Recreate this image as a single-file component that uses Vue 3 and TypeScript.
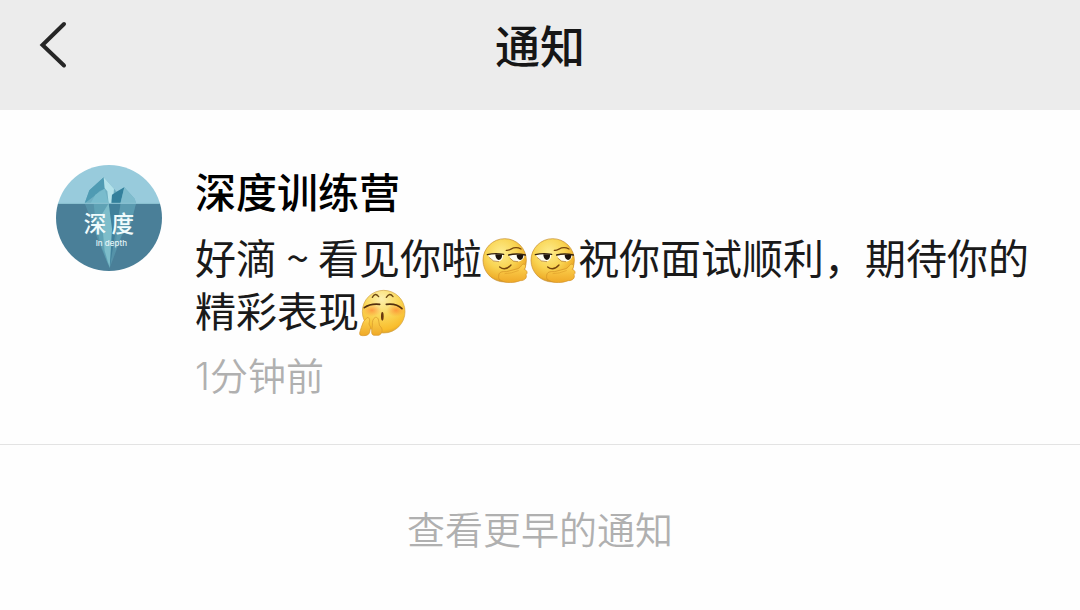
<script setup lang="ts">
type Part = { kind: 'text'; value: string } | { kind: 'smirk' } | { kind: 'whisper' }

interface Notice {
  name: string
  parts: Part[]
  time: string
}

const notices: Notice[] = [
  {
    name: '深度训练营',
    parts: [
      { kind: 'text', value: '好滴 ~ 看见你啦' },
      { kind: 'smirk' },
      { kind: 'smirk' },
      { kind: 'text', value: '祝你面试顺利，期待你的' },
      { kind: 'text', value: '精彩表现' },
      { kind: 'whisper' },
    ],
    time: '1分钟前',
  },
]
</script>

<template>
  <div class="page">
    <svg class="defs" width="0" height="0" aria-hidden="true">
      <defs>
        <radialGradient id="face" cx="0.42" cy="0.32" r="0.72">
          <stop offset="0" stop-color="#fdec8e" />
          <stop offset="0.5" stop-color="#f9d452" />
          <stop offset="0.82" stop-color="#f0b22e" />
          <stop offset="1" stop-color="#c9881c" />
        </radialGradient>
        <linearGradient id="hand" x1="0" y1="0" x2="0" y2="1">
          <stop offset="0" stop-color="#fed653" />
          <stop offset="1" stop-color="#efa928" />
        </linearGradient>
        <radialGradient id="pale" cx="0.45" cy="0.2" r="0.85">
          <stop offset="0" stop-color="#fdf0b0" />
          <stop offset="0.45" stop-color="#fad95c" />
          <stop offset="0.85" stop-color="#f9bd2c" />
          <stop offset="1" stop-color="#d99a25" />
        </radialGradient>
        <radialGradient id="blush">
          <stop offset="0" stop-color="#ff7a2e" stop-opacity="0.65" />
          <stop offset="1" stop-color="#ff8c32" stop-opacity="0" />
        </radialGradient>
      </defs>
    </svg>

    <header class="bar">
      <button class="back" type="button" aria-label="返回">
        <svg viewBox="0 0 28 48" width="28" height="48" aria-hidden="true">
          <path d="M25 3L3.500 24L25 44.500" fill="none" stroke="#262626" stroke-width="4" stroke-linejoin="miter" stroke-linecap="round" />
        </svg>
      </button>
      <h1 class="title">通知</h1>
    </header>

    <main>
      <article v-for="notice in notices" :key="notice.name" class="notice">
        <svg class="avatar" viewBox="32 29 318 318" role="img" aria-label="深度 In depth">
          <clipPath id="disc"><circle cx="191" cy="188" r="159" /></clipPath>
          <g clip-path="url(#disc)">
            <rect x="32" y="29" width="318" height="115" fill="#98cbdc" />
            <rect x="32" y="144" width="318" height="203" fill="#4a7f98" />
            <path d="M175 66L206 100L214 109L237 96L268 130L272 144H118L132 105Z" fill="#6fb0c3" />
            <path d="M175 66L132 105L118 144L150 120L162 108L178 100Z" fill="#4f9bb3" />
            <path d="M175 66L206 100L202 144H190L186 108L178 98Z" fill="#b4e2ea" />
            <path d="M178 100L190 144H136L150 118Z" fill="#79bccd" />
            <path d="M214 109L237 96L225 144H198L200 118Z" fill="#33809c" />
            <path d="M237 96L268 130L272 144H226Z" fill="#7fbccd" />
            <path d="M118 144H272L258 202L230 240L193 338L158 255L136 190Z" fill="#5592a8" />
            <path d="M145 144H188V325L164 262L150 195Z" fill="#5fa2b5" />
            <path d="M190 144H226L212 220L193 338L188 290Z" fill="#40809b" />
            <path d="M168 180L190 144L200 220L193 338L178 286Z" fill="#7dbdca" />
            <path d="M226 144H272L256 203L228 240L208 290Z" fill="#5b9bb0" />
            <path d="M32 144H350" stroke="#8fc6d5" stroke-width="3" />
          </g>
          <text class="mark" x="191" y="230" text-anchor="middle">深 度</text>
          <text class="tagline" x="198" y="271" text-anchor="middle">In depth</text>
        </svg>

        <div class="content">
          <h2 class="name">{{ notice.name }}</h2>
          <p class="message">
            <template v-for="(part, i) in notice.parts" :key="i"
              ><span v-if="part.kind === 'text'">{{ part.value }}</span
              ><svg v-else-if="part.kind === 'smirk'" class="emoji" viewBox="21 20 144 144" role="img" aria-label="斜眼笑">
                <circle cx="89" cy="90" r="65" fill="url(#face)" stroke="#c48a25" stroke-width="2" />
                <path d="M39 73Q60 67 84 72Q86 91 68 94Q46 94 39 73Z" fill="#fffef2" />
                <path d="M102 74Q122 69 149 73Q146 93 125 94Q106 92 102 74Z" fill="#fffef2" />
                <path d="M61 72H81Q82 88 71 89Q61 86 61 72Z" fill="#1d140c" />
                <path d="M125 73H145Q145 87 135 89Q125 86 125 73Z" fill="#1d140c" />
                <path d="M37 73Q60 67 86 72M101 74Q124 68 151 74" fill="none" stroke="#34210d" stroke-width="4" stroke-linecap="round" />
                <path d="M42 81Q54 96 72 94M104 83Q114 96 129 94" fill="none" stroke="#a66b19" stroke-width="2" />
                <path d="M94 60C108 62 114 43 138 56" fill="none" stroke="#75450d" stroke-width="4" stroke-linecap="round" />
                <path d="M74 110Q91 123 108 104" fill="none" stroke="#75450d" stroke-width="4" stroke-linecap="round" />
                <path d="M71 139C70 124 82 123 94 124L129 115C140 110 139 101 147 101C155 105 151 112 148 117C158 121 158 129 153 133C157 143 149 151 136 151C117 158 93 159 80 151C72 148 70 144 71 139Z" fill="url(#hand)" stroke="#d29022" stroke-width="2" />
                <path d="M90 130Q108 130 130 121" fill="none" stroke="#e0a02a" stroke-width="2" stroke-linecap="round" />
              </svg
              ><svg v-else class="emoji" viewBox="27 27 144 144" role="img" aria-label="悄悄话">
                <circle cx="101" cy="92" r="64" fill="url(#pale)" stroke="#cfa044" stroke-width="2" />
                <ellipse cx="66" cy="88" rx="28" ry="19" fill="url(#blush)" />
                <ellipse cx="138" cy="88" rx="28" ry="19" fill="url(#blush)" />
                <path d="M67 49Q75 33 86 47M109 49Q119 33 129 47" fill="none" stroke="#6e4a14" stroke-width="4" stroke-linecap="round" />
                <path d="M43 80Q61 67 89 70M109 70Q139 66 156 83" fill="none" stroke="#53300e" stroke-width="5" stroke-linecap="round" />
                <ellipse cx="97" cy="106" rx="4" ry="13" fill="#68380f" />
                <path d="M51 110C61 108 59 120 57 129Q65 139 60 149C58 163 49 164 37 164Q27 164 29 155L34 139Q38 120 51 110Z" fill="url(#hand)" stroke="#d4962a" stroke-width="2" />
                <path d="M76 109C88 108 85 123 89 134C100 143 98 159 86 163H71C61 160 66 144 67 134Q66 114 76 109Z" fill="url(#hand)" stroke="#d4962a" stroke-width="2" />
              </svg
            ></template>
          </p>
          <time class="time">{{ notice.time }}</time>
        </div>
      </article>

      <button class="earlier" type="button">查看更早的通知</button>
    </main>
  </div>
</template>

<style>
body {
  margin: 0;
  background: #fefefe;
}
</style>

<style scoped>
.page {
  min-height: 100vh;
  background: #fefefe;
  color: #1a1a1a;
  font-family: "Noto Sans CJK SC", sans-serif;
}

.defs {
  display: block;
}

.bar {
  display: grid;
  grid-template-columns: 1fr auto 1fr;
  align-items: center;
  padding: 15px 39px 35px;
  background: #ececec;
}

.back,
.earlier {
  border: 0;
  background: none;
  font: inherit;
  cursor: pointer;
}

.back {
  justify-self: start;
  padding: 0;
}

.back svg {
  display: block;
}

.title {
  margin: 0;
  font-size: 45px;
  font-weight: 500;
  line-height: 60px;
  color: #161616;
}

.notice {
  display: flex;
  align-items: flex-start;
  gap: 33px;
  padding: 55px 30px 43px 56px;
  border-bottom: 1px solid #e3e3e3;
}

.avatar {
  flex: none;
  width: 106px;
  height: 106px;
}

.mark {
  fill: #f0fbfc;
  font-family: "Noto Sans CJK SC", sans-serif;
  font-size: 68px;
  font-weight: 500;
}

.tagline {
  fill: #e4f4f7;
  font-family: Inter, sans-serif;
  font-size: 24px;
  font-weight: 500;
}

.content {
  flex: 1;
  min-width: 0;
}

.name {
  margin: 0;
  font-size: 41px;
  font-weight: 500;
  line-height: 50px;
  color: #000;
}

.message {
  margin: 15px 0;
  font-size: 41px;
  line-height: 53px;
}

.emoji {
  width: 48px;
  height: 48px;
  margin: -4px 0;
  overflow: visible;
  vertical-align: -7px;
}

.time {
  display: block;
  font-family: Inter, "Noto Sans CJK SC", sans-serif;
  font-size: 38px;
  font-weight: 350;
  line-height: 50px;
  color: #b0b0b0;
}

.earlier {
  display: block;
  width: 100%;
  padding: 53px 30px 48px;
  font-size: 38px;
  font-weight: 350;
  line-height: 60px;
  color: #b0b0b0;
}
</style>
